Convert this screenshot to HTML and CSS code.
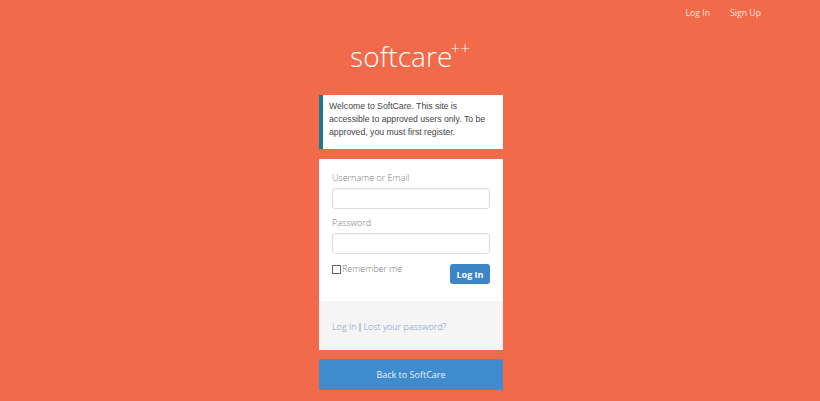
FILE: index.html
```html
<!DOCTYPE html>
<html>
<head>
<meta charset="utf-8">
<link rel="stylesheet" href="styles.css">
</head>
<body>
<nav class="topnav">
  <a href="#">Log In</a>
  <a href="#">Sign Up</a>
</nav>
<main class="login">
  <h1 class="brand">softcare<sup>++</sup></h1>
  <p class="message">Welcome to SoftCare. This site is accessible to approved users only. To be approved, you must first register.</p>
  <form class="card">
    <div class="card-body">
      <label class="label">Username or Email</label>
      <input class="input" type="text">
      <label class="label">Password</label>
      <input class="input" type="password">
      <div class="row">
        <label class="remember"><span class="box"></span>Remember me</label>
        <button class="btn" type="button">Log In</button>
      </div>
    </div>
    <div class="card-foot">
      <a href="#">Log In</a> <span class="sep">|</span> <a href="#">Lost your password?</a>
    </div>
  </form>
  <a class="back" href="#">Back to SoftCare</a>
</main>
</body>
</html>
```
FILE: styles.css
```css
html, body { margin: 0; padding: 0; }
body {
  background: #f16a4a;
  font-family: "Open Sans", "Liberation Sans", sans-serif;
  height: 401px;
  overflow: hidden;
}
.topnav {
  display: flex;
  justify-content: flex-end;
  gap: 20px;
  padding: 6px 59px 0 0;
  height: 20px;
}
.topnav a {
  color: #fde3dc;
  font-size: 8.7px;
  text-decoration: none;
  line-height: 14px;
}
.login {
  width: 184px;
  margin: 0 auto;
  display: flex;
  flex-direction: column;
  position: relative;
  left: 1px;
}
.brand {
  margin: 13px 0 0 0;
  text-align: center;
  font-weight: 300;
  font-size: 28px;
  color: #fff;
  line-height: 34px;
  height: 42px;
  letter-spacing: 0.1px;
}
.brand sup {
  font-size: 17px;
  vertical-align: 0;
  position: relative;
  top: -13px;
  left: -2px;
  letter-spacing: 0;
}
.message {
  margin: 14px 0 0 0;
  background: #fff;
  border-left: 4px solid #1b7a90;
  padding: 5px 8px 10px 6px;
  font-family: "Liberation Sans", Arial, sans-serif;
  font-size: 8.7px;
  line-height: 13px;
  color: #444;
}
.card {
  margin: 10px 0 0 0;
  background: #fff;
  border-radius: 1px;
}
.card-body {
  padding: 13px 13px 17px 13px;
  display: flex;
  flex-direction: column;
}
.label {
  font-size: 9px;
  font-weight: 300;
  color: #777;
  line-height: 12px;
  margin-bottom: 4px;
}
.input {
  height: 21px;
  box-sizing: border-box;
  border: 1px solid #ddd;
  border-radius: 3px;
  margin: 0 0 8px 0;
  padding: 0;
  box-shadow: inset 0 1px 2px rgba(0,0,0,0.05);
}
.row {
  display: flex;
  justify-content: space-between;
  align-items: flex-start;
  margin-top: 2px;
}
.remember {
  display: flex;
  align-items: center;
  font-size: 9px;
  font-weight: 300;
  color: #777;
  line-height: 10px;
}
.box {
  width: 7px;
  height: 7px;
  border: 1px solid #666;
  margin-right: 1px;
}
.btn {
  width: 40px;
  height: 20px;
  border: 0;
  border-radius: 3px;
  background: #3d86c6;
  color: #fff;
  font-family: "Open Sans", sans-serif;
  font-size: 9px;
  font-weight: 700;
  padding: 0;
}
.card-foot {
  background: #f5f5f5;
  height: 49px;
  padding: 2px 13px 0 13px;
  display: flex;
  align-items: center;
  gap: 1px;
  font-size: 9px;
  font-weight: 300;
  color: #777;
  box-sizing: border-box;
}
.card-foot a { color: #6f95cc; text-decoration: none; }
.sep { color: #666; font-weight: 400; }
.back {
  margin-top: 9px;
  height: 31px;
  background: #3f8bcd;
  color: #e9f1fa;
  font-size: 9px;
  text-decoration: none;
  display: flex;
  align-items: center;
  justify-content: center;
  border-radius: 1px;
}
```
